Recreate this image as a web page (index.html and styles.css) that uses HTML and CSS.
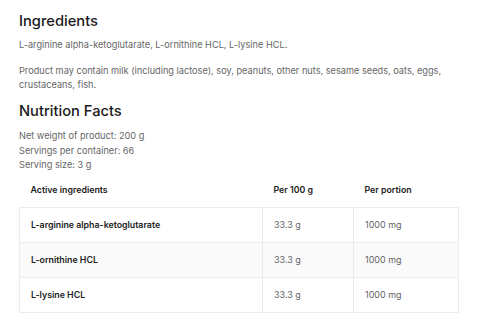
FILE: index.html
```html
<!DOCTYPE html>
<html lang="en">
<head>
<meta charset="utf-8">
<link rel="stylesheet" href="styles.css">
</head>
<body>
<div class="page">
  <h2 class="title">Ingredients</h2>
  <p class="text first">L-arginine alpha-ketoglutarate, L-ornithine HCL, L-lysine HCL.</p>
  <p class="text">Product may contain milk (including lactose), soy, peanuts, other nuts, sesame seeds, oats, eggs, crustaceans, fish.</p>
  <h2 class="title second">Nutrition Facts</h2>
  <div class="facts">
    <div>Net weight of product: 200 g</div>
    <div>Servings per container: 66</div>
    <div>Serving size: 3 g</div>
  </div>
  <table class="nutri">
    <thead>
      <tr><th class="c1">Active ingredients</th><th class="c2">Per 100 g</th><th class="c3">Per portion</th></tr>
    </thead>
    <tbody>
      <tr><td class="name">L-arginine alpha-ketoglutarate</td><td>33.3 g</td><td>1000 mg</td></tr>
      <tr class="alt"><td class="name">L-ornithine HCL</td><td>33.3 g</td><td>1000 mg</td></tr>
      <tr><td class="name">L-lysine HCL</td><td>33.3 g</td><td>1000 mg</td></tr>
    </tbody>
  </table>
</div>
</body>
</html>
```
FILE: styles.css
```css
html, body { margin: 0; padding: 0; background: #fff; }
.page {
  padding: 11px 21px 0 19px;
  font-family: Inter, "Open Sans", sans-serif;
  color: #666;
  font-size: 9.2px;
}
.title {
  margin: 0;
  font-size: 14.7px;
  line-height: 20px;
  font-weight: 500;
  color: #1a1a1a;
}
.title.second { margin-top: 9px; }
.text { margin: 12px 0 0; line-height: 14px; }
.text.first { margin-top: 7px; }
.facts { margin-top: 8px; line-height: 14.5px; }
.nutri {
  width: 440px;
  border-collapse: collapse;
  margin-top: 0;
}
.nutri th {
  text-align: left;
  font-weight: 600;
  color: #222;
  height: 34px;
  padding: 0 0 0 11px;
  font-size: 8.8px;
}
.nutri .c1 { width: 232px; }
.nutri .c2 { width: 80px; }
.nutri td {
  border: 1px solid #ececec;
  height: 34px;
  padding: 0 0 0 11px;
  font-size: 9px;
  color: #666;
}
.nutri td.name { font-weight: 600; color: #222; font-size: 8.8px; }
.nutri tr.alt td { background: #fafafa; }
```
